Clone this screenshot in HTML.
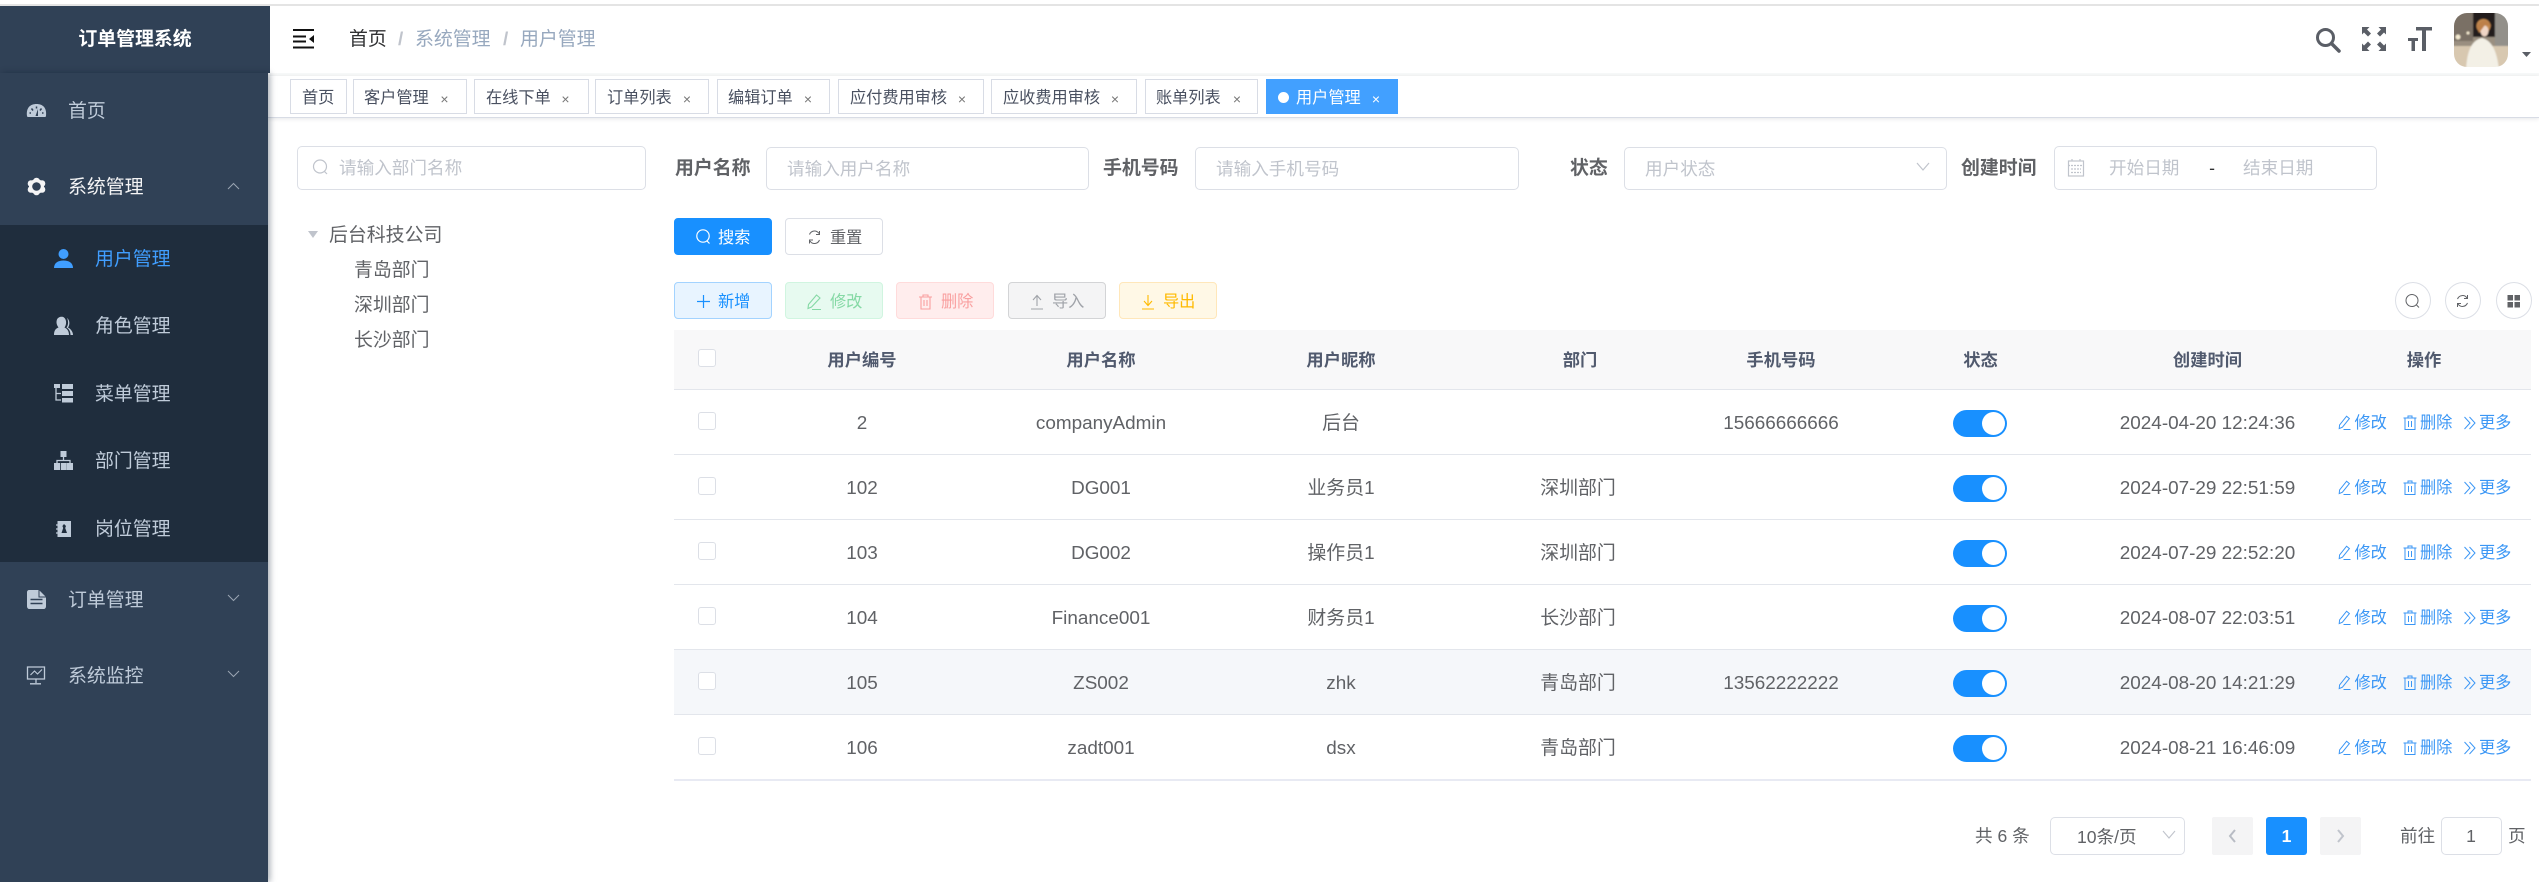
<!DOCTYPE html>
<html lang="zh-CN">
<head>
<meta charset="utf-8">
<title>用户管理</title>
<style>
*{box-sizing:border-box}
html,body{margin:0;padding:0;background:#fff}
body{position:relative;width:2539px;height:882px;overflow:hidden;font-family:"Liberation Sans","Noto Sans CJK SC",sans-serif;color:#606266}
.b{position:absolute}
.t{position:absolute;white-space:nowrap;line-height:1.2;transform:translateY(calc(-50% + 1.5px))}
.m{position:absolute;white-space:nowrap;line-height:1.2;transform:translate(-50%,calc(-50% + 1.5px))}
.menu{font-size:18.9px;color:#bfcbd9;left:95px}
.top{font-size:18.9px;color:#bfcbd9;left:68px}
.crumb{font-size:18.9px;top:39px;color:#97a8be}
.tab{position:absolute;top:79px;height:35px;background:#fff;border:1px solid #d8dce5}
.tt{font-size:16.2px;color:#495060;top:97px}
.x{font-size:14px;color:#777;top:98px}
.inp{position:absolute;background:#fff;border:1px solid #dcdfe6;border-radius:5px}
.ph{font-size:17.6px;color:#c0c4cc}
.lab{font-size:18.9px;font-weight:700;color:#606266;top:168px}
.btn{position:absolute;top:282px;height:37px;width:98px;border-radius:4px;border:1px solid}
.bt{font-size:16.2px;top:301px}
.circle{position:absolute;top:282px;width:36px;height:37px;border-radius:50%;border:1px solid #dcdfe6;background:#fff}
.th{font-size:17.3px;font-weight:700;color:#515a6e;top:359px}
.td{font-size:18.9px;color:#606266}
.op{font-size:16.2px;color:#3a96f5}
.o1{left:2354.5px}.o2{left:2420px}.o3{left:2479px}
.cb{position:absolute;left:698px;width:18px;height:18px;background:#fff;border:1px solid #dcdfe6;border-radius:3px}
.line{position:absolute;left:674px;width:1857px;height:1px;background:#e3e6ec}
.sw{position:absolute;left:1953px;width:54px;height:27px;border-radius:14px;background:#1890ff}
.sw:after{content:"";position:absolute;right:2px;top:2px;width:23px;height:23px;border-radius:50%;background:#fff}
.pg{font-size:17.6px;color:#606266;top:835px}
</style>
</head>
<body>
<!-- top line -->
<div class="b" style="left:0;top:4px;width:2539px;height:2px;background:#e4e4e4"></div>

<!-- main bars -->
<div class="b" style="left:270px;top:73px;width:2269px;height:3px;background:#f7f8f8"></div>
<div class="b" style="left:268px;top:76px;width:2271px;height:42px;background:#fff;border-bottom:1px solid #d8dce5;box-shadow:0 1px 4px rgba(0,21,41,.10)"></div>

<!-- sidebar -->
<div class="b" style="left:0;top:6px;width:270px;height:67px;background:#304156"></div>
<div class="b" style="left:0;top:73px;width:268px;height:809px;background:#304156;box-shadow:2px 0 6px rgba(0,21,41,.35)"></div>
<div class="b" style="left:0;top:225px;width:268px;height:337px;background:#1f2d3d"></div>
<div class="m" style="left:135px;top:39px;font-size:18.9px;font-weight:700;color:#fff">订单管理系统</div>
<div class="t top" style="top:111px">首页</div>
<div class="t top" style="top:187px;color:#f4f4f5">系统管理</div>
<div class="t menu" style="top:259px;color:#409eff">用户管理</div>
<div class="t menu" style="top:326px">角色管理</div>
<div class="t menu" style="top:394px">菜单管理</div>
<div class="t menu" style="top:461px">部门管理</div>
<div class="t menu" style="top:529px">岗位管理</div>
<div class="t top" style="top:600px">订单管理</div>
<div class="t top" style="top:676px">系统监控</div>

<!-- breadcrumb -->
<div class="t crumb" style="left:349px;color:#303133">首页</div>
<div class="t crumb" style="left:398px;color:#c0c4cc;font-weight:700">/</div>
<div class="t crumb" style="left:415px">系统管理</div>
<div class="t crumb" style="left:503px;color:#c0c4cc;font-weight:700">/</div>
<div class="t crumb" style="left:520px">用户管理</div>

<!-- tabs -->
<div class="tab" style="left:290px;width:57px"></div><div class="t tt" style="left:302px">首页</div>
<div class="tab" style="left:353px;width:114px"></div><div class="t tt" style="left:364px">客户管理</div><div class="m x" style="left:444.5px">×</div>
<div class="tab" style="left:474px;width:115px"></div><div class="t tt" style="left:486px">在线下单</div><div class="m x" style="left:565.5px">×</div>
<div class="tab" style="left:595px;width:114px"></div><div class="t tt" style="left:607px">订单列表</div><div class="m x" style="left:687px">×</div>
<div class="tab" style="left:717px;width:113px"></div><div class="t tt" style="left:728px">编辑订单</div><div class="m x" style="left:808px">×</div>
<div class="tab" style="left:838px;width:146px"></div><div class="t tt" style="left:850px">应付费用审核</div><div class="m x" style="left:962px">×</div>
<div class="tab" style="left:991px;width:146px"></div><div class="t tt" style="left:1003px">应收费用审核</div><div class="m x" style="left:1115px">×</div>
<div class="tab" style="left:1145px;width:113px"></div><div class="t tt" style="left:1156px">账单列表</div><div class="m x" style="left:1237px">×</div>
<div class="tab" style="left:1266px;width:132px;background:#42a0ff;border-color:#42a0ff"></div>
<div class="b" style="left:1278px;top:92px;width:11px;height:11px;border-radius:50%;background:#fff"></div>
<div class="t tt" style="left:1296px;color:#fff">用户管理</div><div class="m x" style="left:1376px;color:#fff">×</div>

<!-- tree panel -->
<div class="inp" style="left:297px;top:146px;width:349px;height:44px"></div>
<div class="t ph" style="left:339px;top:167px">请输入部门名称</div>
<div class="t td" style="left:329px;top:235px">后台科技公司</div>
<div class="t td" style="left:354px;top:270px">青岛部门</div>
<div class="t td" style="left:354px;top:305px">深圳部门</div>
<div class="t td" style="left:354px;top:340px">长沙部门</div>

<!-- form -->
<div class="t lab" style="left:675px">用户名称</div>
<div class="inp" style="left:766px;top:147px;width:323px;height:43px"></div>
<div class="t ph" style="left:787px;top:168px">请输入用户名称</div>
<div class="t lab" style="left:1103px">手机号码</div>
<div class="inp" style="left:1195px;top:147px;width:324px;height:43px"></div>
<div class="t ph" style="left:1216px;top:168px">请输入手机号码</div>
<div class="t lab" style="left:1570px">状态</div>
<div class="inp" style="left:1624px;top:147px;width:323px;height:43px"></div>
<div class="t ph" style="left:1645px;top:168px">用户状态</div>
<div class="t lab" style="left:1961px">创建时间</div>
<div class="inp" style="left:2054px;top:146px;width:323px;height:44px"></div>
<div class="t ph" style="left:2109px;top:167px">开始日期</div>
<div class="m" style="left:2212px;top:167px;font-size:17.6px;color:#303133">-</div>
<div class="t ph" style="left:2243px;top:167px">结束日期</div>

<!-- search buttons -->
<div class="btn" style="left:674px;top:218px;background:#1890ff;border-color:#1890ff"></div>
<div class="t bt" style="left:718px;top:237px;color:#fff">搜索</div>
<div class="btn" style="left:785px;top:218px;background:#fff;border-color:#dcdfe6"></div>
<div class="t bt" style="left:830px;top:237px;color:#606266">重置</div>

<!-- toolbar -->
<div class="btn" style="left:674px;background:#e8f4ff;border-color:#a3d3ff"></div>
<div class="t bt" style="left:718px;color:#1890ff">新增</div>
<div class="btn" style="left:785px;background:#e7faf0;border-color:#d0f5e0"></div>
<div class="t bt" style="left:830px;color:#85d9a5">修改</div>
<div class="btn" style="left:896px;background:#ffeded;border-color:#ffdbdb"></div>
<div class="t bt" style="left:941px;color:#f9a0a0">删除</div>
<div class="btn" style="left:1008px;background:#f4f4f5;border-color:#d3d4d6"></div>
<div class="t bt" style="left:1052px;color:#a0a3a9">导入</div>
<div class="btn" style="left:1119px;background:#fff8e6;border-color:#ffe7ba"></div>
<div class="t bt" style="left:1163px;color:#ffba00">导出</div>

<div class="circle" style="left:2394.5px"></div>
<div class="circle" style="left:2444.5px"></div>
<div class="circle" style="left:2495.5px"></div>

<!-- table -->
<div class="b" style="left:674px;top:330px;width:1857px;height:59px;background:#f8f8f9"></div>
<div class="b" style="left:674px;top:650px;width:1857px;height:64px;background:#f5f7fa"></div>
<div class="line" style="top:389px"></div>
<div class="line" style="top:454px"></div>
<div class="line" style="top:519px"></div>
<div class="line" style="top:584px"></div>
<div class="line" style="top:649px"></div>
<div class="line" style="top:714px"></div>
<div class="line" style="top:779px;height:2px;background:#e8eaf3"></div>

<div class="cb" style="top:349px"></div>
<div class="m th" style="left:862px">用户编号</div>
<div class="m th" style="left:1101px">用户名称</div>
<div class="m th" style="left:1341px">用户昵称</div>
<div class="m th" style="left:1580px">部门</div>
<div class="m th" style="left:1781px">手机号码</div>
<div class="m th" style="left:1980.5px">状态</div>
<div class="m th" style="left:2207.5px">创建时间</div>
<div class="m th" style="left:2424px">操作</div>

<!-- row 1 -->
<div class="cb" style="top:412px"></div>
<div class="m td" style="left:862px;top:422.5px">2</div>
<div class="m td" style="left:1101px;top:422.5px">companyAdmin</div>
<div class="m td" style="left:1341px;top:422.5px">后台</div>
<div class="m td" style="left:1781px;top:422.5px">15666666666</div>
<div class="sw" style="top:410px"></div>
<div class="m td" style="left:2207.5px;top:422.5px">2024-04-20 12:24:36</div>
<div class="t op o1" style="top:422px">修改</div><div class="t op o2" style="top:422px">删除</div><div class="t op o3" style="top:422px">更多</div>

<!-- row 2 -->
<div class="cb" style="top:477px"></div>
<div class="m td" style="left:862px;top:487.5px">102</div>
<div class="m td" style="left:1101px;top:487.5px">DG001</div>
<div class="m td" style="left:1341px;top:487.5px">业务员1</div>
<div class="m td" style="left:1578px;top:487.5px">深圳部门</div>
<div class="sw" style="top:475px"></div>
<div class="m td" style="left:2207.5px;top:487.5px">2024-07-29 22:51:59</div>
<div class="t op o1" style="top:487px">修改</div><div class="t op o2" style="top:487px">删除</div><div class="t op o3" style="top:487px">更多</div>

<!-- row 3 -->
<div class="cb" style="top:542px"></div>
<div class="m td" style="left:862px;top:552.5px">103</div>
<div class="m td" style="left:1101px;top:552.5px">DG002</div>
<div class="m td" style="left:1341px;top:552.5px">操作员1</div>
<div class="m td" style="left:1578px;top:552.5px">深圳部门</div>
<div class="sw" style="top:540px"></div>
<div class="m td" style="left:2207.5px;top:552.5px">2024-07-29 22:52:20</div>
<div class="t op o1" style="top:552px">修改</div><div class="t op o2" style="top:552px">删除</div><div class="t op o3" style="top:552px">更多</div>

<!-- row 4 -->
<div class="cb" style="top:607px"></div>
<div class="m td" style="left:862px;top:617.5px">104</div>
<div class="m td" style="left:1101px;top:617.5px">Finance001</div>
<div class="m td" style="left:1341px;top:617.5px">财务员1</div>
<div class="m td" style="left:1578px;top:617.5px">长沙部门</div>
<div class="sw" style="top:605px"></div>
<div class="m td" style="left:2207.5px;top:617.5px">2024-08-07 22:03:51</div>
<div class="t op o1" style="top:617px">修改</div><div class="t op o2" style="top:617px">删除</div><div class="t op o3" style="top:617px">更多</div>

<!-- row 5 -->
<div class="cb" style="top:672px"></div>
<div class="m td" style="left:862px;top:682.5px">105</div>
<div class="m td" style="left:1101px;top:682.5px">ZS002</div>
<div class="m td" style="left:1341px;top:682.5px">zhk</div>
<div class="m td" style="left:1578px;top:682.5px">青岛部门</div>
<div class="m td" style="left:1781px;top:682.5px">13562222222</div>
<div class="sw" style="top:670px"></div>
<div class="m td" style="left:2207.5px;top:682.5px">2024-08-20 14:21:29</div>
<div class="t op o1" style="top:682px">修改</div><div class="t op o2" style="top:682px">删除</div><div class="t op o3" style="top:682px">更多</div>

<!-- row 6 -->
<div class="cb" style="top:737px"></div>
<div class="m td" style="left:862px;top:747.5px">106</div>
<div class="m td" style="left:1101px;top:747.5px">zadt001</div>
<div class="m td" style="left:1341px;top:747.5px">dsx</div>
<div class="m td" style="left:1578px;top:747.5px">青岛部门</div>
<div class="sw" style="top:735px"></div>
<div class="m td" style="left:2207.5px;top:747.5px">2024-08-21 16:46:09</div>
<div class="t op o1" style="top:747px">修改</div><div class="t op o2" style="top:747px">删除</div><div class="t op o3" style="top:747px">更多</div>

<!-- pagination -->
<div class="t pg" style="left:1975px">共 6 条</div>
<div class="inp" style="left:2050px;top:817px;width:135px;height:38px"></div>
<div class="t pg" style="left:2077px;top:836px">10条/页</div>
<div class="b" style="left:2212px;top:817px;width:41px;height:38px;background:#f4f4f5;border-radius:2px"></div>
<div class="b" style="left:2266px;top:817px;width:41px;height:38px;background:#1890ff;border-radius:3px"></div>
<div class="m" style="left:2286.5px;top:835px;font-size:17.6px;font-weight:700;color:#fff">1</div>
<div class="b" style="left:2320px;top:817px;width:41px;height:38px;background:#f4f4f5;border-radius:2px"></div>
<div class="t pg" style="left:2400px">前往</div>
<div class="inp" style="left:2440.5px;top:817px;width:61px;height:38px"></div>
<div class="m pg" style="left:2471px">1</div>
<div class="t pg" style="left:2508px">页</div>

<!-- icons overlay -->
<svg class="b" style="left:0;top:0" width="2539" height="882" viewBox="0 0 2539 882" fill="none">
<defs>
<g id="pen"><path d="M8.6 1.2 11.400 3.600 4.400 12.200 1.200 13.600 1.600 10Z" stroke="#3a96f5" stroke-width="1"/><path d="M5.500 14.500H12.500" stroke="#3a96f5" stroke-width="1"/></g>
<g id="bin"><path d="M0 3H13M4.500 3V1H8.500V3M1.500 3V14.500H11.500V3M5 6V12M8 6V12" stroke="#3a96f5" stroke-width="1"/></g>
<g id="more"><path d="M0.500 1 6 7 .5 13M5.500 1 11 7 5.500 13" stroke="#3a96f5" stroke-width="1"/></g>
<g id="ops"><use href="#pen" x="2338" y="0"/><use href="#bin" x="2403.500" y="0"/><use href="#more" x="2464" y="1"/></g>
<clipPath id="av"><rect x="2454" y="13" width="54" height="54" rx="13"/></clipPath>
<filter id="bl" x="-10%" y="-10%" width="120%" height="120%"><feGaussianBlur stdDeviation=".8"/></filter>
</defs>

<!-- sidebar icons -->
<path d="M27 116C26 108 30 104 36.500 104S47 108 46 116C46 117 45 117 44 117H29C28 117 27 117 27 116Z" fill="#bfcbd9"/>
<path d="M36.500 106.500V108.500M31.500 108.500 33 110.500M41.500 108.500 40 110.500M29.500 113H31M42 113H43.500" stroke="#304156" stroke-width="1.500"/>
<path d="M38 109 35.500 116H38Z" fill="#304156"/>
<g fill="#f4f4f5">
<circle cx="36.500" cy="186.500" r="7.500"/>
<circle cx="36.500" cy="181" r="3.300"/><circle cx="36.500" cy="192" r="3.300"/>
<circle cx="31" cy="183.500" r="3.300"/><circle cx="42" cy="183.500" r="3.300"/>
<circle cx="31" cy="189.500" r="3.300"/><circle cx="42" cy="189.500" r="3.300"/>
</g>
<circle cx="36.500" cy="186.500" r="4.300" fill="#304156"/>
<circle cx="63.500" cy="254" r="5" fill="#409eff"/>
<path d="M54 268C54 263 58 260.500 63.500 260.500S73 263 73 268Z" fill="#409eff"/>
<path d="M54 335C54 330 56 328.500 58.500 327.500 56.500 325 56 322 57 319.500 58 317 62 316 64 317.500 67 320 66.500 325 64.500 327.500 67 328.500 69 331 69 335Z" fill="#bfcbd9"/>
<path d="M67 318C70 320 70 325 68 327.500 71 329 73 332 73 335H70.500C70.500 331 68.500 328.500 66.500 327.500 68.500 325 68.500 321 67 318Z" fill="#bfcbd9"/>
<path d="M54 384H60V388H54ZM62 384H73V389H62ZM62 391H73V396H62ZM62 398H73V402.500H62Z" fill="#bfcbd9"/>
<path d="M56 388V400H61M56 393.500H61" stroke="#bfcbd9" stroke-width="1.300"/>
<path d="M60.500 451H66.500V457H60.500ZM54 463H60V470H54ZM60.800 463H66.800V470H60.800ZM67 463H73V470H67Z" fill="#bfcbd9"/>
<path d="M63.500 457V461M57 463V460.500H70V463" stroke="#bfcbd9" stroke-width="1.300"/>
<rect x="57.500" y="521" width="13.500" height="16" fill="#bfcbd9"/>
<path d="M64 524 66 526 65.200 528 67 533H61.500L63.200 528 62.400 526Z" fill="#1f2d3d"/>
<path d="M56 525H59M56 529H59M56 533H59" stroke="#bfcbd9" stroke-width="1.300"/>
<path d="M29 590H39L46 597V606C46 608 45 609 43.500 609H29.500C28 609 27 608 27 606V592C27 591 28 590 29 590Z" fill="#bfcbd9"/>
<path d="M39 590V597H46" stroke="#304156" stroke-width="1"/>
<path d="M30.500 599.500H42.500M30.500 603.500H42.500" stroke="#304156" stroke-width="1.600"/>
<path d="M27.500 667H44.500V679H27.500ZM36 679V683M30 683.800H41" stroke="#bfcbd9" stroke-width="1.300"/>
<path d="M30.500 675 34.500 671 37.500 674 42 669.500" stroke="#bfcbd9" stroke-width="1.100"/>
<path d="M228 189 233.500 183.500 239 189" stroke="#9aa5b2" stroke-width="1"/>
<path d="M228 595 233.500 600.500 239 595M228 671 233.500 676.500 239 671" stroke="#9aa5b2" stroke-width="1"/>

<!-- hamburger -->
<path d="M293 30H314M293 47.500H314" stroke="#111" stroke-width="2"/>
<path d="M293 36.500H306M293 41.500H306" stroke="#111" stroke-width="2"/>
<path d="M314 35 309 39 314 43Z" fill="#111"/>

<!-- header right -->
<circle cx="2325.500" cy="37.500" r="8" stroke="#5a5e66" stroke-width="3"/>
<path d="M2331.500 43.500 2339 51" stroke="#5a5e66" stroke-width="3.500" stroke-linecap="round"/>
<path d="M2362 27H2369.500L2367 29.500 2371 33.500 2368 36.500 2364 32.500 2362 34.500ZM2386 27H2378.500L2381 29.500 2377 33.500 2380 36.500 2384 32.500 2386 34.500ZM2362 51H2369.500L2367 48.500 2371 44.500 2368 41.500 2364 45.500 2362 43.500ZM2386 51H2378.500L2381 48.500 2377 44.500 2380 41.500 2384 45.500 2386 43.500Z" fill="#5a5e66"/>
<path d="M2416 27H2432V30.500H2426V51H2422V30.500H2416ZM2408 38H2418V41H2415V51H2411.500V41H2408Z" fill="#5a5e66"/>
<path d="M2522 52H2531L2526.500 57Z" fill="#5a5e66"/>

<!-- avatar -->
<g clip-path="url(#av)"><g filter="url(#bl)">
<rect x="2452" y="11" width="58" height="58" fill="#9a8f80"/>
<rect x="2452" y="11" width="21" height="30" fill="#7a7065"/>
<rect x="2473" y="11" width="22" height="26" fill="#241d1a"/>
<rect x="2495" y="11" width="15" height="42" fill="#93908a"/>
<rect x="2452" y="46" width="58" height="24" fill="#d8c8b0"/>
<circle cx="2458" cy="37" r="2.500" fill="#f4ead0"/>
<circle cx="2468" cy="33" r="1.500" fill="#f4ead0"/>
<path d="M2466 70C2467 50 2472 40 2482 38 2491 40 2497 50 2499 70Z" fill="#f3f0e6"/>
<circle cx="2483.500" cy="26" r="7" fill="#c48a50"/>
<ellipse cx="2484.500" cy="31" rx="4" ry="5.500" fill="#f0d6c6"/>
<path d="M2477 26C2480 19 2489 18 2491 26L2485 25 2479 33Z" fill="#bd8048"/>
</g></g>

<!-- tab-area & form icons -->
<circle cx="320" cy="166.500" r="6.500" stroke="#c0c4cc" stroke-width="1.200"/>
<path d="M324.500 171.500 327 174" stroke="#c0c4cc" stroke-width="1.200"/>
<path d="M308 231H318L313 238Z" fill="#c0c4cc"/>
<path d="M1917 163 1923 170 1929 163" stroke="#c0c4cc" stroke-width="1.200"/>
<rect x="2068.500" y="161" width="15" height="15" stroke="#c0c4cc" stroke-width="1.200"/>
<path d="M2068 165.500H2084M2072 159V162M2080 159V162M2071 169H2081M2071 172.500H2081" stroke="#c0c4cc" stroke-width="1.200" stroke-dasharray="2 1"/>

<!-- search/reset btn icons -->
<circle cx="703" cy="236" r="6.200" stroke="#fff" stroke-width="1.200"/>
<path d="M707 241 709.500 243.500" stroke="#fff" stroke-width="1.200"/>
<path d="M809.500 234.500A5.500 6 0 0 1 819 233.500M819.500 240A5.500 6 0 0 1 810 241M819.500 231V234.500H816M809.500 243.500V240H813" stroke="#606266" stroke-width="1"/>

<!-- toolbar icons -->
<path d="M697 301.500H710M703.500 295V308" stroke="#1890ff" stroke-width="1.200"/>
<path d="M816.500 295 820 298 811.500 307 808 308.500 808.500 304.500ZM812 309.500H821" stroke="#85d9a5" stroke-width="1.100"/>
<path d="M919 297H932M923 297V295H928V297M921 297V309H930V297M924 300V306M927 300V306" stroke="#f9a0a0" stroke-width="1.100"/>
<path d="M1031 309H1043M1037 306V296M1033 300 1037 295.500 1041 300" stroke="#a0a3a9" stroke-width="1.100"/>
<path d="M1142 309H1154M1148 295V305M1144 301 1148 305.500 1152 301" stroke="#ffba00" stroke-width="1.100"/>

<!-- circles icons -->
<circle cx="2412" cy="300.500" r="6" stroke="#606266" stroke-width="1"/>
<path d="M2416.500 305 2419 307.500" stroke="#606266" stroke-width="1"/>
<path d="M2457.500 299A5.500 5.800 0 0 1 2467 298M2467.500 303A5.500 5.800 0 0 1 2458 304M2467.500 295V298.500H2464M2457.500 307V303.500H2461" stroke="#606266" stroke-width="1"/>
<path d="M2507.500 295H2513V300.500H2507.500ZM2514.500 295H2520V300.500H2514.500ZM2507.500 302H2513V307.500H2507.500ZM2514.500 302H2520V307.500H2514.500Z" fill="#606266"/>

<!-- op icons per row -->
<use href="#ops" y="415"/><use href="#ops" y="480"/><use href="#ops" y="545"/><use href="#ops" y="610"/><use href="#ops" y="675"/><use href="#ops" y="740"/>

<!-- pagination icons -->
<path d="M2163 831 2169 838 2175 831" stroke="#c0c4cc" stroke-width="1.100"/>
<path d="M2235 830 2230 836 2235 842" stroke="#b8bcc4" stroke-width="2"/>
<path d="M2338 830 2343 836 2338 842" stroke="#c0c4cc" stroke-width="2"/>
</svg>
</body>
</html>
